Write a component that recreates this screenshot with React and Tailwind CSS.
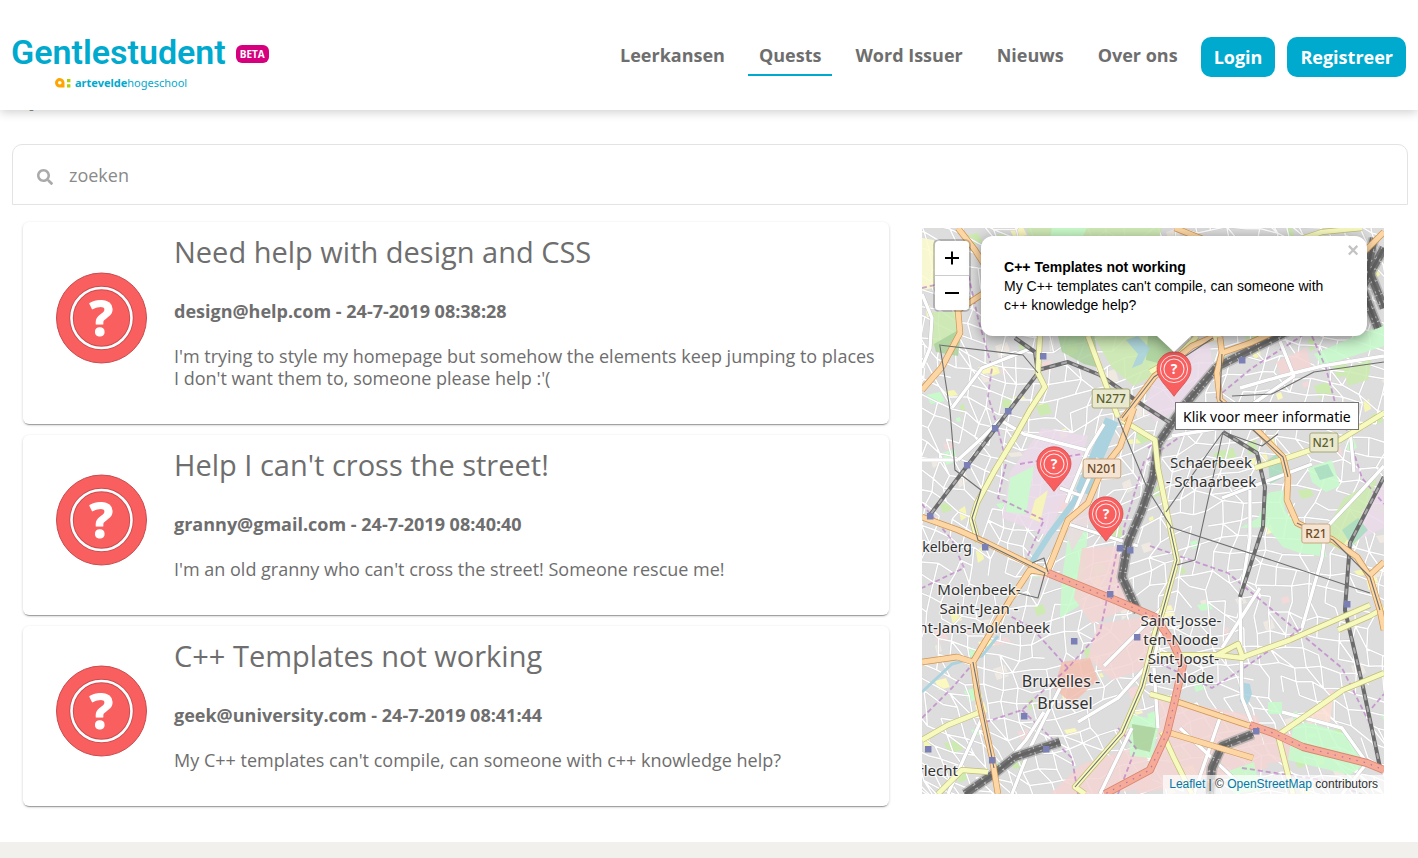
import { FaSearch } from "react-icons/fa";

const quests = [
  {
    title: "Need help with design and CSS",
    meta: "design@help.com - 24-7-2019 08:38:28",
    text: "I'm trying to style my homepage but somehow the elements keep jumping to places I don't want them to, someone please help :'(",
  },
  {
    title: "Help I can't cross the street!",
    meta: "granny@gmail.com - 24-7-2019 08:40:40",
    text: "I'm an old granny who can't cross the street! Someone rescue me!",
  },
  {
    title: "C++ Templates not working",
    meta: "geek@university.com - 24-7-2019 08:41:44",
    text: "My C++ templates can't compile, can someone with c++ knowledge help?",
  },
];

const navItems = ["Leerkansen", "Quests", "Word Issuer", "Nieuws", "Over ons"];

function Logo() {
  return (
    <a href="#home" aria-label="Gentlestudent" className="-ml-px mt-4 flex flex-col text-[#00a9ce]">
      <span className="flex items-center gap-[10px]">
        <span className="font-['Roboto',sans-serif] text-[34px] leading-8 font-semibold">Gentlestudent</span>
        <span className="mt-1 rounded-md bg-[#d6007f] px-1 font-['Open_Sans',sans-serif] text-[10px] leading-[18px] font-bold text-white">
          BETA
        </span>
      </span>
      <span className="mt-[7px] ml-11 flex items-center gap-1 font-['Noto_Sans',sans-serif] text-[11px] leading-4">
        <svg viewBox="0 0 16 10" className="h-[10px] w-4" aria-hidden="true">
          <path fillRule="evenodd" fill="#ffa400" d="M4.8 0A4.6 4.6 0 0 0 4.8 9.6H9.5V4.8A4.8 4.8 0 0 0 4.8 0ZM4.8 3A1.8 1.8 0 1 1 4.8 6.6A1.8 1.8 0 0 1 4.8 3Z" />
          <path fill="#b5cf00" d="M12 1h3.4v3.2H12zM12 6.3h3.4v3.2H12z" />
        </svg>
        <span>
          <b>artevelde</b>hogeschool
        </span>
      </span>
    </a>
  );
}

function QuestBadge() {
  return (
    <svg viewBox="0 0 92 92" className="mb-[10px] size-[92px] shrink-0" aria-hidden="true">
      <circle cx="45.500" cy="46" r="45" fill="#fa5f5f" stroke="#c94c50" strokeWidth="1" />
      <circle cx="45.500" cy="46" r="30" fill="none" stroke="#c94c50" strokeWidth="4.500" />
      <circle cx="45.500" cy="46" r="30" fill="none" stroke="#fff" strokeWidth="2.600" />
      <text x="45.500" y="64" textAnchor="middle" fontSize="49" fontWeight="700" fill="#fff" stroke="#fff" strokeWidth="1.200" strokeLinejoin="round" className="font-['Open_Sans',sans-serif]">
        ?
      </text>
    </svg>
  );
}

function QuestCard({ title, meta, text }) {
  return (
    <li className="flex items-center gap-[26px] rounded-md bg-white pr-2 pl-[33px] shadow-[0_1px_3px_rgba(0,0,0,0.2),0_2px_1px_-1px_rgba(0,0,0,0.3)]">
      <QuestBadge />
      <div className="self-start pt-[13px] pb-[35px]">
        <h2 className="text-[29px] leading-[33px]">{title}</h2>
        <p className="mt-8 font-bold">{meta}</p>
        <p className="mt-[23px]">{text}</p>
      </div>
    </li>
  );
}

/* ---------- Map ---------- */

const MAP_W = 462;
const MAP_H = 566;

function seeded(seed) {
  let s = seed;
  return () => {
    s = (s * 1664525 + 1013904223) % 4294967296;
    return s / 4294967296;
  };
}

function buildStreets() {
  const rnd = seeded(77);
  const step = 16;
  const cols = 44;
  const rows = 50;
  const pts = [];
  for (let r = 0; r < rows; r++) {
    pts.push([]);
    for (let c = 0; c < cols; c++) {
      const u = (c - 7) * step;
      const v = (r - 7) * step;
      const a = 0.45 * Math.sin(u / 150) + 0.5 * Math.cos(v / 130);
      pts[r].push([
        u + 34 * Math.sin(v / 85 + a) + (rnd() - 0.5) * 8,
        v + 30 * Math.sin(u / 75 + a) + (rnd() - 0.5) * 8,
      ]);
    }
  }
  let d = "";
  for (let r = 0; r < rows - 1; r++) {
    for (let c = 0; c < cols - 1; c++) {
      const p = pts[r][c];
      const seg = (q) => `M${p[0].toFixed(1)} ${p[1].toFixed(1)}L${q[0].toFixed(1)} ${q[1].toFixed(1)}`;
      if (rnd() < 0.84) d += seg(pts[r][c + 1]);
      if (rnd() < 0.72) d += seg(pts[r + 1][c]);
      if (rnd() < 0.18) d += seg(pts[r + 1][c + 1]);
    }
  }
  return d;
}

function buildPatches() {
  const rnd = seeded(2019);
  const fills = ["#c8facc", "#cdebb0", "#f7f7b5", "#f3d9d9", "#cdebb0", "#fbf8c0", "#efe9e2"];
  return Array.from({ length: 190 }, () => {
    const x = rnd() * MAP_W;
    const y = rnd() * MAP_H;
    const w = 4 + rnd() * 10;
    const h = 4 + rnd() * 9;
    return {
      d: `M${x.toFixed(0)} ${y.toFixed(0)}l${w.toFixed(0)} ${(-h / 3).toFixed(0)}l${(w / 3).toFixed(0)} ${h.toFixed(0)}l${(-w).toFixed(0)} ${(h / 3).toFixed(0)}z`,
      fill: fills[Math.floor(rnd() * fills.length)],
    };
  });
}

const streets = buildStreets();
const patches = buildPatches();

const areas = [
  ["#fbfad0", "0,10 12,12 14,28 12,60 0,62"],
  ["#cdebb0", "10,84 34,84 36,120 6,118"],
  ["#add19e", "12,116 40,100 36,128 14,124"],
  ["#cdebb0", "104,0 240,0 236,12 108,12"],
  ["#c8facc", "130,0 165,0 160,10 128,10"],
  ["#cdebb0", "166,100 262,100 246,140 212,158 190,140 174,112"],
  ["#add19e", "136,108 172,106 178,140 162,136 140,124"],
  ["#add19e", "226,108 262,106 240,136 224,132"],
  ["#aad3df", "204,112 216,108 228,120 220,136 210,140 216,126"],
  ["#ebdbe8", "246,134 276,116 288,116 292,150 270,172 234,194 222,180 232,152"],
  ["#ebdbe8", "88,244 120,200 166,208 158,236 126,308 80,290"],
  ["#c8facc", "88,250 112,238 104,286 84,284"],
  ["#f7f7b5", "113,272 126,262 118,294 108,290"],
  ["#c8facc", "148,296 166,300 160,376 138,390 140,350"],
  ["#f3d5d3", "160,320 196,318 206,380 170,396 152,370"],
  ["#f3d5d3", "176,396 230,388 226,440 190,452 166,430"],
  ["#f3bfb2", "140,434 168,430 176,452 150,476 132,460"],
  ["#f3d5d3", "232,470 336,488 346,540 250,560 214,566 236,520"],
  ["#f3d5d3", "340,500 378,508 370,532 344,536"],
  ["#f3d5d3", "128,566 160,536 222,516 232,560 180,566"],
  ["#c8facc", "206,486 238,492 230,530 208,528"],
  ["#add19e", "210,496 234,500 228,524 212,520"],
  ["#c8facc", "346,265 361,262 363,282 375,299 401,315 405,329 378,325 361,319 345,299 318,300 336,290"],
  ["#aadcc0", "346,232 360,222 364,248 348,256"],
  ["#c8facc", "386,240 410,232 418,258 404,264 390,254"],
  ["#aadcc0", "392,240 406,236 412,248 398,252"],
  ["#cdebb0", "398,312 422,270 456,250 440,290 418,322"],
  ["#ebdbe8", "440,284 462,256 462,300 436,312"],
  ["#aadcc0", "420,302 436,290 446,302 430,318"],
  ["#c8facc", "371,499 385,494 428,507 445,535 428,547 366,532"],
  ["#fadfd5", "384,486 412,464 408,494 386,496"],
  ["#c8facc", "392,126 462,96 462,118 400,138"],
  ["#f3d5d3", "354,134 384,120 390,140 360,150"],
  ["#cdebb0", "422,142 450,130 446,152 426,158"],
  ["#c8facc", "346,474 360,474 360,486 346,486"],
  ["#aad3df", "318,454 328,456 330,466 326,476 318,474"],
  ["#c8facc", "304,544 332,534 338,562 312,566"],
  ["#e9dcdf", "140,290 160,268 172,286 150,324"],
];

const canal = "M190 192L168 240L156 268L146 282L128 306L110 334";

const orange = [
  "36,0 53,22 62,36", "70,60 36,82 38,105 20,139 0,162",
  "200,192 232,149 270,118 291,109", "212,180 198,219 180,242 166,275 146,292 126,342",
  "126,345 108,342 88,372 51,434 56,469 70,529 76,566", "0,434 35,429 51,434",
  "298,109 300,125 295,145 298,172 335,202 361,229 366,249 365,272 375,295 411,312 435,329 448,349 458,382 462,402",
  "448,347 462,334", "300,125 328,115 352,104", "253,0 283,12", "462,4 444,22 434,34",
  "253,473 325,497 355,505", "245,504 331,530", "0,289 36,302 65,315 126,345",
];
const red = [
  "126,345 193,372 233,389 251,415 261,437 253,472 245,505 228,542 183,566",
  "328,497 351,505 381,519 445,535 462,542",
];
const yellow = [
  "118,108 116,145 123,159 108,182 93,209 73,242 55,275 50,292 56,314",
  "166,108 176,135 196,189", "200,192 233,212 236,240 248,299 255,332 241,382 233,405 220,459 200,505 153,559 163,566",
  "238,427 295,427 316,416 321,430 295,427", "321,429 368,412 448,377", "228,466 253,473",
  "356,507 421,462 462,445", "356,507 371,566", "333,240 368,229 418,212 462,185",
  "0,512 26,497 56,485", "16,566 40,542 66,544", "228,144 255,129 275,108", "370,14 400,4 440,0",
  "240,504 252,530 270,566", "416,402 448,388 462,380",
];
const whiteMain = [
  "0,66 10,90 8,120 0,140", "0,232 36,232", "36,232 60,210 78,192 102,206 164,222", "176,230 146,298 120,344",
  "182,196 166,222 144,275", "138,260 160,268", "318,160 360,148 400,138 462,128", "356,108 372,148 310,190",
  "328,262 328,310 318,372 320,470 332,500", "462,238 440,262 404,300 400,330 380,400", "146,296 216,318",
  "250,208 310,198", "300,270 390,236", "138,460 108,520 90,566", "122,484 104,512 80,540", "26,566 60,490",
  "156,494 196,470 232,430 240,400", "182,438 210,410 240,380", "178,566 210,500", "445,535 420,500 360,484", "445,535 420,566",
  "110,120 60,140 30,180", "236,500 232,440", "338,360 300,420", "426,180 432,244", "258,500 322,560", "300,484 272,566",
];
const rails = [
  "93,110 113,124 116,145 86,184 8,287", "116,142 146,134 178,147 222,178 250,196",
  "301,204 335,225 343,259 341,299 318,369", "462,249 428,315 423,382 441,459 458,539",
];
const yards = [
  "368,102 295,139 261,179 236,216 231,250 220,282 206,315 200,349 216,384",
  "462,20 440,60 456,100", "452,10 446,40 462,80",
  "43,566 73,545 93,529 123,519 138,514", "288,566 290,540 300,518 331,506",
];
const thin = [
  "17,117 101,127 116,145", "18,118 28,182 33,242 59,262 50,290 56,312 123,345 116,370 96,365",
  "248,299 358,335 448,365", "301,204 273,332 255,337", "301,204 244,284", "301,204 340,218 356,206",
  "110,335 122,330 126,344", "196,190 226,262 250,300",
  "51,434 58,470 72,540", "310,168 350,166 392,144 462,134", "248,300 255,332 241,382 220,459 200,505 153,559",
  "200,190 232,149 291,110", "375,295 411,312 448,349 458,382", "300,126 298,172 361,229 366,249",
];
const boundary = [
  "0,60 26,54 44,36 56,90 70,140 66,168 74,194 84,232", "84,236 76,270 122,292 104,332",
  "98,236 160,226", "0,276 30,312 42,340 0,360", "294,170 330,140 392,100", "390,108 404,140 414,178 424,200 440,250 462,276",
  "226,220 256,196 300,190", "262,206 222,234 202,300 196,360", "196,318 178,404 146,440 100,482 64,494",
  "146,440 110,400 88,388", "228,318 306,345 360,390 420,440 450,500", "230,432 290,460 322,440 380,400",
  "0,490 30,460 56,430", "320,540 400,552 440,566", "450,480 462,466", "100,482 150,530 156,566", "196,566 214,520 196,500",
];
const stations = [
  [121, 128], [86, 183], [73, 200], [45, 237], [8, 288], [63, 319], [198, 320], [208, 322], [188, 366],
  [152, 413], [215, 409], [102, 488], [6, 521], [70, 532], [124, 521], [425, 376], [334, 503], [320, 132],
];
const labels = [
  ["Koekelberg", 50, 324, 14, "end"],
  ["Molenbeek-", 57, 367, 15, "middle"],
  ["Saint-Jean -", 57, 386, 15, "middle"],
  ["Sint-Jans-Molenbeek", 128, 405, 15, "end"],
  ["Bruxelles -", 139, 459, 16, "middle"],
  ["Brussel", 143, 481, 16, "middle"],
  ["Anderlecht", 36, 548, 15, "end"],
  ["Schaerbeek", 289, 240, 15, "middle"],
  ["- Schaarbeek", 289, 259, 15, "middle"],
  ["Saint-Josse-", 259, 398, 15, "middle"],
  ["ten-Noode", 259, 417, 15, "middle"],
  ["- Sint-Joost-", 257, 436, 15, "middle"],
  ["ten-Node", 259, 455, 15, "middle"],
];
const shields = [
  ["N277", 189, 171, "#e9e9d0", "#a6a878", "#5c602c"],
  ["N201", 180, 241, "#f6e4d2", "#c9a680", "#6b4a26"],
  ["N21", 402, 215, "#e9e9d0", "#a6a878", "#5c602c"],
  ["R21", 394, 306, "#f6e4d2", "#c9a680", "#6b4a26"],
];

function Lines({ list, ...props }) {
  return (
    <g fill="none" strokeLinejoin="round" {...props}>
      {list.map((points) => (
        <polyline key={points} points={points} />
      ))}
    </g>
  );
}

function MapDrawing() {
  return (
    <svg viewBox="0 0 462 566" preserveAspectRatio="xMidYMid slice" className="block size-full" aria-hidden="true">
      <rect width="462" height="566" fill="#dddddd" />
      {patches.map((p) => (
        <path key={p.d} d={p.d} fill={p.fill} />
      ))}
      <path d={streets} stroke="#cecece" strokeWidth="2.200" fill="none" />
      <path d={streets} stroke="#fff" strokeWidth="1.500" fill="none" />
      {areas.map(([fill, points]) => (
        <polygon key={points} points={points} fill={fill} fillOpacity="0.88" />
      ))}
      <path d={canal} stroke="#aad3df" strokeWidth="6" fill="none" />
      <path d="M190 192L160 264" stroke="#aad3df" strokeWidth="14" fill="none" />
      <path d="M76 408L60 428L30 436L0 464" stroke="#aad3df" strokeWidth="3" fill="none" />
      <Lines list={boundary} stroke="#b873c4" strokeOpacity="0.65" strokeWidth="1.800" strokeDasharray="5 3" />
      <Lines list={whiteMain} stroke="#bdbdbd" strokeWidth="4.200" />
      <Lines list={whiteMain} stroke="#fff" strokeWidth="3.400" />
      <Lines list={yards} stroke="#a3a3a3" strokeWidth="11" strokeOpacity="0.6" />
      <Lines list={yards} stroke="#737373" strokeWidth="8" strokeDasharray="13 1 8 1" />
      <Lines list={yards} stroke="#b4b4b4" strokeWidth="5" strokeDasharray="2 9" />
      <Lines list={yards} stroke="#636363" strokeWidth="3" />
      <Lines list={rails} stroke="#6b6b6b" strokeWidth="4" />
      <Lines list={rails} stroke="#a8a8a8" strokeWidth="2" strokeDasharray="6 6" />
      <Lines list={yellow} stroke="#c3bd72" strokeWidth="6" />
      <Lines list={yellow} stroke="#f7fabf" strokeWidth="4.600" />
      <Lines list={orange} stroke="#cf9550" strokeWidth="6.400" />
      <Lines list={orange} stroke="#fcd6a4" strokeWidth="5" />
      <Lines list={red} stroke="#d98570" strokeWidth="8" />
      <Lines list={red} stroke="#f5ab98" strokeWidth="6.400" />
      <Lines list={red} stroke="#b873a4" strokeWidth="1.200" strokeDasharray="1.500 6" />
      <Lines list={thin} stroke="#6f6f6f" strokeWidth="1.100" />
      {stations.map(([x, y]) => (
        <rect key={`${x}-${y}`} x={x - 3} y={y - 3} width="6.500" height="6.500" fill="#7a80b5" />
      ))}
      {shields.map(([name, x, y, fill, line, ink]) => (
        <g key={name}>
          <rect x={x - name.length * 4.7} y={y - 10} width={name.length * 9.4} height="19" rx="2" fill={fill} stroke={line} />
          <text x={x} y={y + 4} textAnchor="middle" fontSize="12" fontWeight="500" fill={ink} className="font-['Noto_Sans',sans-serif]">
            {name}
          </text>
        </g>
      ))}
      <g fill="#333" stroke="#fff" strokeOpacity="0.6" strokeWidth="2.500" strokeLinejoin="round" paintOrder="stroke">
        {labels.map(([name, x, y, size, anchor]) => (
          <text key={name} x={x} y={y} fontSize={size} textAnchor={anchor} className="font-['Noto_Sans',sans-serif]">
            {name}
          </text>
        ))}
      </g>
    </svg>
  );
}

const markers = [
  { name: "C++ Templates not working", x: 252, y: 169 },
  { name: "Help I can't cross the street!", x: 132, y: 264 },
  { name: "Need help with design and CSS", x: 184, y: 314 },
];

function Marker({ name, x, y }) {
  return (
    <button
      type="button"
      aria-label={name}
      className="absolute h-[46px] w-9 -translate-x-1/2 -translate-y-full"
      style={{ left: `${(x / MAP_W) * 100}%`, top: `${(y / MAP_H) * 100}%` }}
    >
      <svg viewBox="0 0 36 46" className="block size-full" aria-hidden="true">
        <path d="M18 .8A17 17 0 0 0 1 17.800C1 28 12 36.500 18 45.300C24 36.500 35 28 35 17.800A17 17 0 0 0 18 .8Z" fill="#fa5f5f" stroke="#d04e50" strokeWidth="0.8" />
        <circle cx="18" cy="18" r="13.600" fill="none" stroke="#fff" strokeOpacity="0.8" strokeWidth="1" />
        <circle cx="18" cy="18" r="10" fill="none" stroke="#fff" strokeOpacity="0.85" strokeWidth="1.100" />
        <text x="18" y="23" textAnchor="middle" fontSize="14" fontWeight="700" fill="#fff" className="font-['Open_Sans',sans-serif]">
          ?
        </text>
      </svg>
    </button>
  );
}

function QuestMap() {
  return (
    <section aria-label="Kaart" className="relative mt-[6px] mb-3 min-w-0 flex-[8] overflow-hidden font-['Liberation_Sans',Arial,sans-serif] text-black">
      <div className="absolute inset-0">
        <MapDrawing />
      </div>
      {markers.map((m) => (
        <Marker key={m.name} {...m} />
      ))}

      <div className="absolute top-[11px] left-[11px] flex flex-col overflow-hidden rounded-md border-2 border-black/20 bg-clip-padding">
        <button type="button" aria-label="Zoom in" className="flex h-[35px] w-[34px] items-center justify-center border-b border-[#ccc] bg-white">
          <svg viewBox="0 0 16 16" className="size-4" aria-hidden="true">
            <path d="M8 1.500v13M1 8h14" stroke="#000" strokeWidth="2" />
          </svg>
        </button>
        <button type="button" aria-label="Zoom out" className="flex h-[34px] w-[34px] items-center justify-center bg-white">
          <svg viewBox="0 0 16 16" className="size-4" aria-hidden="true">
            <path d="M1 8h14" stroke="#000" strokeWidth="2" />
          </svg>
        </button>
      </div>

      <div
        className="absolute top-2 flex w-[386px] -translate-x-1/2 flex-col items-center drop-shadow-[0_3px_7px_rgba(0,0,0,0.4)]"
        style={{ left: `${(markers[0].x / MAP_W) * 100}%` }}
      >
        <div className="relative w-full rounded-xl bg-white pt-[22px] pr-10 pb-[21px] pl-[23px] text-sm leading-[19px]">
          <b className="block">C++ Templates not working</b>
          <p>My C++ templates can't compile, can someone with c++ knowledge help?</p>
          <button type="button" aria-label="Sluiten" className="absolute top-[5px] right-2 text-xl leading-[18px] font-bold text-[#c3c3c3]">
            ×
          </button>
        </div>
        <svg viewBox="0 0 34 16" className="h-4 w-[34px]" aria-hidden="true">
          <path d="M0 0H34L17 16Z" fill="#fff" />
        </svg>
      </div>

      <div role="tooltip" className="absolute top-[174px] left-[253px] border border-[#767676] bg-white px-[7px] pt-[3px] pb-px font-['Noto_Sans',sans-serif] text-sm leading-[22px] whitespace-nowrap">
        Klik voor meer informatie
      </div>

      <p className="absolute right-0 bottom-0 bg-white/70 px-[6px] text-xs leading-[19px] text-[#333]">
        <a href="#leaflet" className="text-[#0078a8]">Leaflet</a> | ©{" "}
        <a href="#osm" className="text-[#0078a8]">OpenStreetMap</a> contributors
      </p>
    </section>
  );
}

export default function App() {
  return (
    <div className="flex min-h-screen flex-col bg-white font-['Open_Sans',sans-serif] text-lg leading-[22px] text-[#6e6e6e]">
      <header className="sticky top-0 z-10 flex h-[110px] shrink-0 items-center justify-between bg-white px-3 shadow-[0_2px_10px_rgba(0,0,0,0.2)]">
        <Logo />
        <div className="mt-1 flex items-center gap-3">
          <nav className="flex items-center gap-3" aria-label="Hoofdmenu">
            {navItems.map((item) => (
              <a
                key={item}
                href={`#${item}`}
                className={`border-b-2 px-[11px] pt-[5px] pb-[8px] font-bold ${item === "Quests" ? "border-[#00a9ce]" : "border-transparent"}`}
              >
                {item}
              </a>
            ))}
          </nav>
          <div className="flex gap-3 font-bold text-white">
            <button type="button" className="h-10 rounded-[10px] bg-[#00a9ce] px-[13px]">Login</button>
            <button type="button" className="h-10 rounded-[10px] bg-[#00a9ce] px-[13px]">Registreer</button>
          </div>
        </div>
      </header>

      <main className="pr-[10px] pl-3">
        <h1 className="-mt-9 pb-[33px] text-[32px] leading-[37px] text-[#333]">Quests</h1>
        <label className="flex h-[61px] items-center gap-4 rounded-t-[10px] border border-[#e3e3e3] px-6 text-[#aaa]">
          <FaSearch className="mt-1 size-4" aria-hidden="true" />
          <input type="search" aria-label="zoeken" placeholder="zoeken" className="min-w-0 flex-1 bg-transparent outline-none placeholder:text-[#8a8a8a]" />
        </label>
        <div className="flex gap-[33px] pt-[17px] pr-6 pb-9 pl-[11px]">
          <ul className="flex min-w-0 flex-[15] flex-col gap-[11px]">
            {quests.map((q) => (
              <QuestCard key={q.title} {...q} />
            ))}
          </ul>
          <QuestMap />
        </div>
      </main>
      <footer className="min-h-4 flex-1 bg-[#f1f0ec]" />
    </div>
  );
}
